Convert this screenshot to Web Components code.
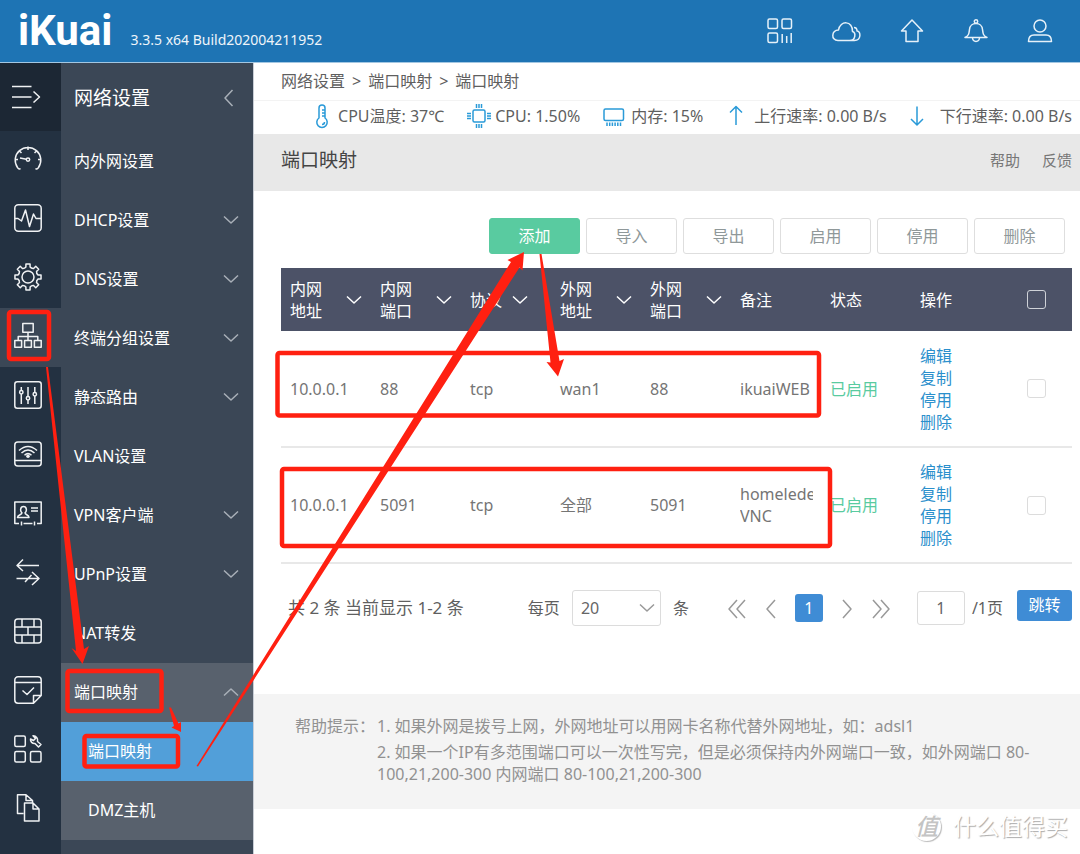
<!DOCTYPE html>
<html lang="zh-CN">
<head>
<meta charset="utf-8">
<meta name="viewport" content="width=device-width, initial-scale=1">
<title>iKuai - 端口映射</title>
<style>
  html, body { margin: 0; padding: 0; }
  body {
    font-family: "Noto Sans", "Noto Sans CJK SC", sans-serif;
    font-size: 16px;
    line-height: 22px;
    color: #5f5f5f;
    background: #fff;
  }
</style>
</head>
<body>
<ik-app>
  <ik-header slot="header" version="3.3.5 x64 Build202004211952"></ik-header>
  <ik-rail slot="rail"></ik-rail>
  <ik-menu slot="menu" heading="网络设置">
    <ik-menu-item>内外网设置</ik-menu-item>
    <ik-menu-item arrow="down">DHCP设置</ik-menu-item>
    <ik-menu-item arrow="down">DNS设置</ik-menu-item>
    <ik-menu-item arrow="down">终端分组设置</ik-menu-item>
    <ik-menu-item arrow="down">静态路由</ik-menu-item>
    <ik-menu-item>VLAN设置</ik-menu-item>
    <ik-menu-item arrow="down">VPN客户端</ik-menu-item>
    <ik-menu-item arrow="down">UPnP设置</ik-menu-item>
    <ik-menu-item>NAT转发</ik-menu-item>
    <ik-menu-item arrow="up" open>端口映射</ik-menu-item>
    <ik-menu-item sub active>端口映射</ik-menu-item>
    <ik-menu-item sub>DMZ主机</ik-menu-item>
  </ik-menu>
  <ik-breadcrumb path="网络设置|端口映射|端口映射"></ik-breadcrumb>
  <ik-stats>
    <ik-stat icon="thermo">CPU温度: 37℃</ik-stat>
    <ik-stat icon="cpu">CPU: 1.50%</ik-stat>
    <ik-stat icon="memory">内存: 15%</ik-stat>
    <ik-stat icon="up">上行速率: 0.00 B/s</ik-stat>
    <ik-stat icon="down" wide>下行速率: 0.00 B/s</ik-stat>
  </ik-stats>
  <ik-page-title heading="端口映射"></ik-page-title>
  <ik-toolbar></ik-toolbar>
  <ik-rules-table></ik-rules-table>
  <ik-pager></ik-pager>
  <ik-tips></ik-tips>
  <ik-watermark></ik-watermark>
  <ik-annotations slot="overlay"></ik-annotations>
</ik-app>

<script>
/* Outline of the settings cog: eight rounded teeth round the centre (14,14). */
function cogPath() {
  const out = [];
  const at = (deg, r) => {
    const a = deg * Math.PI / 180;
    return (14 + r * Math.sin(a)).toFixed(2) + ' ' + (14 - r * Math.cos(a)).toFixed(2);
  };
  for (let i = 0; i < 8; i++) {
    const d = i * 45;
    out.push((i ? 'L' : 'M') + at(d - 9, 13.2), 'L' + at(d + 9, 13.2), 'L' + at(d + 12, 10.2), 'Q' + at(d + 22, 9) + ' ' + at(d + 33, 10.2));
  }
  return out.join('') + 'Z';
}

const ICONS = {
  collapse: ['0 0 28 28', '<path d="M0 3.5H19.500M0 14H19.500M0 24.500H19.500M21.500 8.500L27.500 14L21.500 19.500"/>'],
  gauge: ['0 0 28 28', '<path d="M6.500 23.500C5.500 24.500 4 23.500 3.500 22.500A12.800 12.800 0 1 1 24.500 22.500C24 23.500 22.500 24.500 21.500 23.500M14 1.500V5M5.500 6L7.500 8M22.500 6L20.500 8M1.200 14.500H4M24 14.500H26.800M6 13L12.500 14.200"/><circle cx="14" cy="14.600" r="1.700"/>'],
  activity: ['0 0 28 28', '<rect x=".800" y=".800" width="26.400" height="26.400" rx="3.500"/><path d="M1 14.500H4L7.500 17L11.500 6L15.500 22.500L19.500 10L22 14.500H27"/>'],
  cog: ['0 0 28 28', '<path d="' + cogPath() + '"/><circle cx="14" cy="14" r="6"/>'],
  network: ['0 0 28 28', '<rect x="8.800" y="1.500" width="10.400" height="8.800"/><rect x=".800" y="18.500" width="6.800" height="6.800"/><rect x="10.600" y="18.500" width="6.800" height="6.800"/><rect x="20.400" y="18.500" width="6.800" height="6.800"/><path d="M14 10.300V18.500M4.200 18.500V14.500H23.800V18.500"/>'],
  sliders: ['0 0 28 28', '<rect x=".800" y=".800" width="26.400" height="26.400" rx="2.500"/><path d="M7.300 6V9.500M7.300 13V23M14 6V15.500M14 19V23M20.800 6V11.500M20.800 15V23"/><circle cx="7.300" cy="11.200" r="1.700"/><circle cx="14" cy="17.200" r="1.700"/><circle cx="20.800" cy="13.200" r="1.700"/>'],
  wifi: ['0 0 28 28', '<rect x=".800" y="2" width="26.400" height="24" rx="3"/><path d="M1 20.500H27M5 10.500Q14 2.500 23 10.500M7.500 13Q14 7 20.500 13M10.500 15.200Q14 12 17.500 15.200"/><circle cx="14" cy="16.200" r="1.800" fill="currentColor" stroke="none"/>'],
  card: ['0 0 28 28', '<path d="M5 24.500H.800V3H27.200V24.500H23M9.500 24.500H18.500M7.500 22.500V26.500M20.500 22.500V26.500M17 9H24M17 12H24M3.500 18.500C3.500 15.500 8 16 8 13.800C6 12.500 6 7.500 9.500 7.500S13 12.500 11 13.800C11 16 15 15.500 15 18.500Z"/>'],
  swap: ['0 0 28 28', '<path d="M25 7.500H3M9 1.500L3 7.500L9 13M2.500 20.500H25M18 14L25 20.500L18 27M11 24L17.500 17"/>'],
  wall: ['0 0 28 28', '<rect x=".800" y="2" width="26.400" height="24" rx="3"/><path d="M1 10H27M1 18H27M8 2V10M20 2V10M14 10V18M8 18V26M20 18V26"/>'],
  note: ['0 0 28 28', '<path d="M19 27.200H4A3.200 3.200 0 0 1 .800 24V4A3.200 3.200 0 0 1 4 .800H24A3.200 3.200 0 0 1 27.200 4V19.500L19.500 27.200V19.500H27.200M1 6.500H27M8.500 14.500L13 18.500L20 11.500"/>'],
  tools: ['0 0 28 28', '<rect x=".800" y="1" width="10.500" height="10.500" rx="1.500"/><rect x=".800" y="16.500" width="10.500" height="10.500" rx="1.500"/><rect x="16.500" y="16.500" width="10.500" height="10.500" rx="1.500"/><path d="M16.500 4A4 4 0 0 0 21 8.500L24.500 12L27 9.500L23.500 6.500A4.500 4.500 0 0 0 19 .800L21.500 3.500L19.500 5.500Z"/>'],
  docs: ['0 0 28 28', '<path d="M9.500 19.500H3.500V.800H12L18.500 6.500V9M12 .800V6.500H18.500M10.500 9H19L25 15V27H10.500ZM19 9V15H25"/>'],

  apps: ['0 0 26 26', '<rect x="1" y="1" width="9.500" height="9.500" rx="1.500"/><rect x="15" y="1" width="9.500" height="9.500" rx="1.500"/><rect x="1" y="15" width="9.500" height="9.500" rx="1.500"/><path d="M15.200 16V25M19.700 18V25M24.200 15V25"/>'],
  cloud: ['0 0 30 26', '<path d="M7 22.500H18.500C25 22.500 25 14.500 21.500 13.500C22 2.500 9 2 7.500 12C.500 12-.500 22.500 7 22.500ZM19 22.500H23.500C30.500 22.500 30 13 26 13C26 11 25 9.500 23 9.500"/>'],
  home: ['0 0 26 26', '<path d="M13 2L23.500 13H19V23.500H7V13H2.500Z"/>'],
  bell: ['0 0 26 26', '<circle cx="13" cy="3.500" r="1.700"/><path d="M2 19.500C6 17.500 6 15.500 6.500 11.500C7 3.500 19 3.500 19.500 11.500C20 15.500 20 17.500 24 19.500ZM9.500 20C10 24.500 16 24.500 16.500 20"/>'],
  user: ['0 0 26 26', '<circle cx="13" cy="8" r="6"/><path d="M1.500 23.500C1.500 19 4 17 7 17H19C22 17 24.500 19 24.500 23.500Z"/>'],

  thermo: ['0 0 24 24', '<path d="M9 14V4A3 3 0 0 1 15 4V14A5.200 5.200 0 1 1 9 14ZM12 6H15M12 9H15M12 12H15M14.500 18A2.500 2.500 0 0 1 12 20.500"/>'],
  cpu: ['0 0 24 24', '<rect x="6" y="6" width="12" height="12" rx="1.500"/><path d="M9.500 0V4M12 0V4M14.500 0V4M9.500 20V24M12 20V24M14.500 20V24M0 9.500H4M0 12H4M0 14.500H4M20 9.500H24M20 12H24M20 14.500H24"/>'],
  memory: ['0 0 24 24', '<rect x="1" y="5" width="19.500" height="11.500" rx="1.500"/><path d="M4 18.500V22M6.700 18.500V22M9.400 18.500V22M12.100 18.500V22M14.800 18.500V22M17.500 18.500V22"/>'],
  up: ['0 0 24 24', '<path d="M10 21V2.500M4 8.500L10 2.500L16 8.500"/>'],
  down: ['0 0 24 24', '<path d="M7 2.500V21M1 15L7 21L13 15"/>'],

  chevronDown: ['0 0 16 16', '<path d="M1 4.500L8 11L15 4.500"/>'],
  chevronUp: ['0 0 16 16', '<path d="M1 11.500L8 5L15 11.500"/>'],
  chevronLeft: ['0 0 16 16', '<path d="M11.500 0L4 8L11.500 16"/>'],
  pageFirst: ['0 0 20 20', '<path d="M10 2L2 11L10 20M18 2L10 11L18 20"/>'],
  pagePrev: ['0 0 20 20', '<path d="M14 2L6 11L14 20"/>'],
  pageNext: ['0 0 20 20', '<path d="M6 2L14 11L6 20"/>'],
  pageLast: ['0 0 20 20', '<path d="M2 2L10 11L2 20M10 2L18 11L10 20"/>']
};

class Base extends HTMLElement {
  constructor() { super(); this.attachShadow({ mode: 'open' }); }
  connectedCallback() {
    const t = document.createElement('template');
    t.innerHTML = '<style>*{box-sizing:border-box}:host{box-sizing:border-box}a{text-decoration:none;color:inherit}button,input,select{font:inherit;margin:0}' + this.css() + '</style>' + this.html();
    this.shadowRoot.replaceChildren(t.content.cloneNode(true));
  }
  css() { return ':host{display:block}'; }
  html() { return '<slot></slot>'; }
}
const define = (name, cls) => customElements.define(name, cls);

define('ik-icon', class extends Base {
  css() { return ':host{display:block;flex:none;width:28px;height:28px}svg{display:block;width:100%;height:100%;overflow:visible;fill:none;stroke:currentColor;stroke-width:var(--stroke,1.5);stroke-linejoin:round}'; }
  html() {
    const [box, body] = ICONS[this.getAttribute('name')];
    return `<svg viewBox="${box}" aria-hidden="true">${body}</svg>`;
  }
});

define('ik-app', class extends Base {
  css() { return `
    :host{display:grid;position:relative;min-height:100vh;grid-template:auto 1fr / 61px 192px minmax(0,1fr);overflow:hidden}
    header{grid-column:1/-1}
    nav{display:grid}
    main{min-width:0;display:flex;flex-direction:column;border-left:1px solid #c9ced6}`; }
  html() { return `
    <header><slot name="header"></slot></header>
    <nav aria-label="主导航"><slot name="rail"></slot></nav>
    <nav aria-label="网络设置"><slot name="menu"></slot></nav>
    <main><slot></slot></main>
    <slot name="overlay"></slot>`; }
});

define('ik-header', class extends Base {
  css() { return `
    :host{display:flex;height:63px;background:#1e74b4;color:#fff;border-bottom:1px solid #a3c7e2;padding:0 27px 0 18px;justify-content:space-between}
    .brand{display:flex;align-items:baseline;gap:18px}
    .logo{font:700 42px/62px Roboto,sans-serif}
    .version{font-size:14px;color:#eef5fa}
    .tools{display:flex;align-items:center;gap:38px;color:#e6f1f9}
    ik-icon{width:26px;height:26px}
    .wide{width:30px}`; }
  html() {
    const links = [['apps', '应用'], ['cloud', '云服务'], ['home', '首页'], ['bell', '通知'], ['user', '用户']];
    return `<div class="brand"><span class="logo">iKuai</span><span class="version">${this.getAttribute('version')}</span></div>
    <div class="tools">${links.map(([n, l]) => `<a href="#${n}" aria-label="${l}"><ik-icon name="${n}" class="${n === 'cloud' ? 'wide' : ''}"></ik-icon></a>`).join('')}</div>`;
  }
});

define('ik-rail', class extends Base {
  css() { return `
    :host{display:flex;flex-direction:column;background:#233141;color:#f0f2f4}
    a,button{display:flex;align-items:center;height:59px;padding:0 0 4px 14px}
    button{height:68px;padding:0 0 0 12px;border:0;background:#1c2734;color:inherit}
    a.active{background:#3b4756}`; }
  html() {
    const names = ['gauge', 'activity', 'cog', 'network', 'sliders', 'wifi', 'card', 'swap', 'wall', 'note', 'tools', 'docs'];
    return '<button type="button" aria-label="展开"><ik-icon name="collapse"></ik-icon></button>' +
      names.map(n => `<a href="#${n}" aria-label="${n}" class="${n === 'network' ? 'active' : ''}"><ik-icon name="${n}"></ik-icon></a>`).join('');
  }
});

define('ik-menu', class extends Base {
  css() { return `
    :host{display:flex;flex-direction:column;background:#3b4756;color:#fff}
    .head{display:flex;height:69px;align-items:center;justify-content:space-between;padding:0 16px 0 13px}
    h2{margin:0;font-size:19px;font-weight:400}
    button{display:flex;padding:0;border:0;background:none;color:#a9b0b8}
    ik-icon{width:16px;height:16px}`; }
  html() { return `<div class="head"><h2>${this.getAttribute('heading')}</h2><button type="button" aria-label="收起"><ik-icon name="chevronLeft"></ik-icon></button></div><slot></slot>`; }
});

define('ik-menu-item', class extends Base {
  css() { return `
    :host{display:block}
    a{display:flex;height:59px;align-items:center;justify-content:space-between;padding:0 14px 2px 13px}
    :host([open]) a,:host([sub]) a{background:#58616d}
    :host([sub]) a{padding-left:27px}
    :host([active]) a{background:#529fd9}
    ik-icon{width:16px;height:16px;color:#a9b0b8}`; }
  html() {
    const arrow = this.getAttribute('arrow');
    const icon = arrow ? `<ik-icon name="${arrow === 'up' ? 'chevronUp' : 'chevronDown'}"></ik-icon>` : '';
    return `<a href="#"><slot></slot>${icon}</a>`;
  }
});

define('ik-breadcrumb', class extends Base {
  css() { return `
    :host{display:block;height:38px;padding:7px 27px;border-bottom:1px solid #f3f3f3}
    nav{display:flex;gap:7px}`; }
  html() { return `<nav aria-label="路径">${this.getAttribute('path').split('|').map(p => `<a href="#">${p}</a>`).join('<span>&gt;</span>')}</nav>`; }
});

define('ik-stats', class extends Base {
  css() { return ':host{display:flex;height:33px;align-items:center;justify-content:flex-end;gap:23px;padding:0 8px 3px 0;white-space:nowrap}'; }
});

define('ik-stat', class extends Base {
  css() { return `
    :host{display:flex;align-items:center;gap:4px}
    :host([wide]){gap:6px}
    ik-icon{width:24px;height:24px;color:#2a9ad8}`; }
  html() { return `<ik-icon name="${this.getAttribute('icon')}"></ik-icon><span><slot></slot></span>`; }
});

define('ik-page-title', class extends Base {
  css() { return `
    :host{display:flex;height:57px;align-items:center;gap:22px;padding:0 8px 6px 27px;background:#e8e8e8}
    h1{flex:1;margin:0;font-size:19px;font-weight:400;color:#444}
    a{font-size:15px;color:#777}`; }
  html() { return `<h1>${this.getAttribute('heading')}</h1><a href="#help">帮助</a><a href="#feedback">反馈</a>`; }
});

define('ik-toolbar', class extends Base {
  css() { return `
    :host{display:flex;justify-content:flex-end;gap:6px;padding:27px 15px 14px 27px}
    button{width:91px;height:36px;padding:0;border:1px solid #dedede;border-radius:3px;background:#fff;color:#8f9899}
    .primary{background:#59cba0;border-color:#59cba0;color:#fff}`; }
  html() { return ['添加', '导入', '导出', '启用', '停用', '删除'].map((l, i) => `<button type="button" class="${i ? '' : 'primary'}">${l}</button>`).join(''); }
});

const RULES = [
  ['10.0.0.1', '88', 'tcp', 'wan1', '88', 'ikuaiWEB'],
  ['10.0.0.1', '5091', 'tcp', '全部', '5091', 'homelede VNC']
];

define('ik-rules-table', class extends Base {
  css() { return `
    :host{display:block;padding:0 8px 0 27px}
    table{width:100%;border-collapse:collapse;table-layout:fixed}
    th,td{padding:0 8px 0 9px;text-align:left;font-weight:400;width:90px}
    th{height:63px;background:#4c5267;color:#fff}
    th:last-child,td:last-child{width:auto;padding:0}
    tbody tr{border-bottom:2px solid #e8e8e8}
    td{height:116px;color:#757575}
    .sort{display:flex;align-items:center;justify-content:space-between;padding-right:1px}
    .label{width:33px}
    .near{justify-content:flex-start;gap:9px}
    .sort ik-icon{width:16px;height:16px}
    .clip{overflow:hidden}
    .on{color:#59cba0;white-space:nowrap}
    .acts a{display:block;color:#2a8fcc}
    input{display:block;appearance:none;width:19px;height:19px;margin:0 auto;border:1px solid #dcdcdc;border-radius:3px;background:#fff}
    th input{background:none;border-color:#cfd2d8}`; }
  html() {
    const sort = (t, near) => `<th scope="col"><div class="sort ${near ? 'near' : ''}"><span class="label">${t}</span><ik-icon name="chevronDown"></ik-icon></div></th>`;
    return `<table><thead><tr>
      ${sort('内网地址')}${sort('内网端口')}${sort('协议', true)}${sort('外网地址')}${sort('外网端口')}
      <th scope="col">备注</th><th scope="col">状态</th><th scope="col">操作</th>
      <th scope="col"><input type="checkbox" aria-label="全选"></th></tr></thead><tbody>
      ${RULES.map((r, i) => `<tr>${r.map((c, j) => `<td><div class="${j === 5 ? 'clip' : ''}">${c}</div></td>`).join('')}
        <td class="on">已启用</td>
        <td class="acts"><a href="#edit">编辑</a><a href="#copy">复制</a><a href="#stop">停用</a><a href="#delete">删除</a></td>
        <td><input type="checkbox" aria-label="选择第${i + 1}条"></td></tr>`).join('')}
      </tbody></table>`;
  }
});

define('ik-pager', class extends Base {
  css() { return `
    :host{display:flex;align-items:center;height:88px;padding:0 8px 0 34px;white-space:nowrap}
    .total{flex:1;font-size:17px}
    .size,.pages,.jump{display:flex;align-items:center}
    .size{gap:12px}
    .box{position:relative;display:block}
    select{appearance:none;display:block;width:89px;height:36px;padding:0 8px;border:1px solid #dcdcdc;border-radius:3px;background:#fff;color:#666}
    .box ik-icon{position:absolute;right:6px;top:10px;width:16px;height:16px;color:#999;pointer-events:none}
    .pages{gap:14px;color:#999;margin:0 26px 0 38px}
    .pages button{display:flex;padding:0;border:0;background:none;color:inherit}
    .pages ik-icon{width:20px;height:20px}
    .pages .current{width:28px;height:28px;align-items:center;justify-content:center;border-radius:3px;background:#3f8cd5;color:#fff}
    .jump input{width:48px;height:34px;padding:0;border:1px solid #dcdcdc;border-radius:3px;text-align:center;color:#666;background:#fff}
    .jump{gap:7px}
    .jump button{width:55px;height:31px;margin:0 0 6px 7px;padding:0;border:0;border-radius:3px;background:#3f8cd5;color:#fff}`; }
  html() { return `
    <span class="total">共 2 条 当前显示 1-2 条</span>
    <div class="size"><label for="size">每页</label><span class="box"><select id="size"><option>20</option><option>50</option><option>100</option></select><ik-icon name="chevronDown"></ik-icon></span><span>条</span></div>
    <div class="pages"><button type="button" aria-label="首页"><ik-icon name="pageFirst"></ik-icon></button><button type="button" aria-label="上一页"><ik-icon name="pagePrev"></ik-icon></button><button type="button" class="current">1</button><button type="button" aria-label="下一页"><ik-icon name="pageNext"></ik-icon></button><button type="button" aria-label="末页"><ik-icon name="pageLast"></ik-icon></button></div>
    <div class="jump"><input id="page" type="text" value="1"><label for="page">/1页</label><button type="button">跳转</button></div>`; }
});

define('ik-tips', class extends Base {
  css() { return `
    :host{display:flex;gap:2px;margin-top:42px;padding:21px 27px 24px 41px;background:#f4f4f4;color:#919191}
    span{flex:none}
    ol{margin:0;padding:0;list-style:none;display:grid;gap:4px}`; }
  html() { return `<span>帮助提示：</span><ol>
    <li>1. 如果外网是拨号上网，外网地址可以用网卡名称代替外网地址，如：adsl1</li>
    <li>2. 如果一个IP有多范围端口可以一次性写完，但是必须保持内外网端口一致，如外网端口 80-100,21,200-300 内网端口 80-100,21,200-300</li></ol>`; }
});

define('ik-watermark', class extends Base {
  css() { return `
    :host{display:flex;justify-content:flex-end;align-items:center;gap:12px;padding:2px 12px 0 0;color:#fff;font-size:23px;line-height:30px;text-shadow:1px 1px 1px #aaa}
    .seal{width:29px;height:29px;line-height:28px;border-radius:50%;text-align:center;color:#c4c4c4;font-style:italic;font-weight:500;text-shadow:none;box-shadow:1px 1px 1px #bbb}`; }
  html() { return '<span class="seal">值</span><span>什么值得买</span>'; }
});

/* Hand-drawn guide marks that float over the page: frames and tapered arrows. */
define('ik-annotations', class extends Base {
  css() { return `
    :host{position:absolute;left:0;top:0;pointer-events:none}
    svg{display:block;overflow:visible}
    rect{fill:none;stroke:#ff2011;stroke-width:4.500}
    path{fill:#ff2011}`; }
  html() { return `<svg width="1080" height="854" viewBox="0 0 1080 854" aria-hidden="true">
    <rect x="9" y="312" width="40" height="47" rx="2"/>
    <rect x="67.500" y="671" width="94" height="40" rx="2"/>
    <rect x="84.500" y="736" width="93.500" height="30.500" rx="2"/>
    <rect x="277.500" y="353" width="541.500" height="62.500" rx="2"/>
    <rect x="282" y="469" width="548" height="77" rx="2"/>
    <path d="M46 367L48 367L84 649L89 646L82.500 664L71.500 648L76 651Z"/>
    <path d="M169 707.500L171 707.500L178.500 723.500L181 722L181 732L171.500 727.500L174 726Z"/>
    <path d="M196.500 766L198 766.500L519.500 267.500L522.500 270.500L524 252L507.500 260L511 262Z"/>
    <path d="M539.500 254L541.500 254L559.500 361L564 359L558 376.500L546.500 362L550.500 362.500Z"/>
  </svg>`; }
});
</script>
</body>
</html>
